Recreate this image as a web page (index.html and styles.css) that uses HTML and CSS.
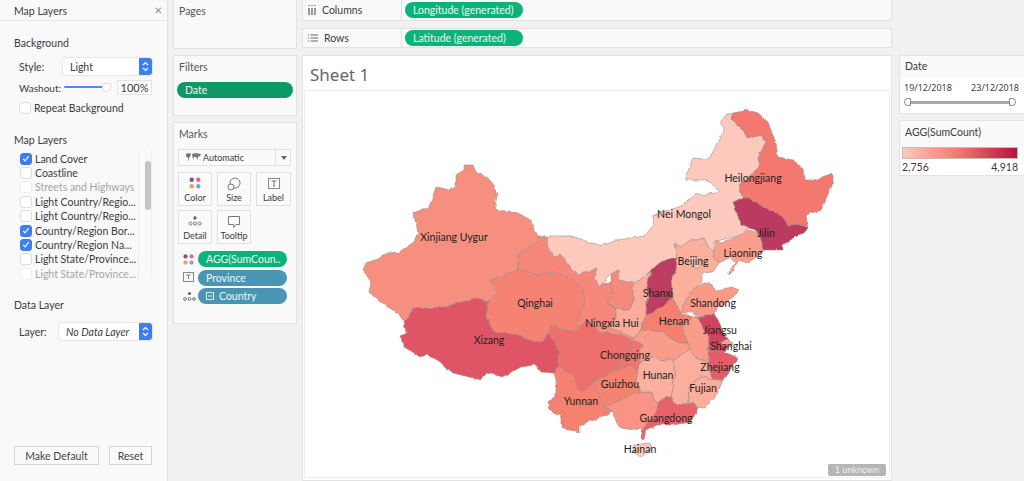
FILE: index.html
```html
<!DOCTYPE html>
<html lang="en">
<head>
<meta charset="utf-8">
<title>Map Layers</title>
<link rel="stylesheet" href="styles.css">
</head>
<body>
<div class="app">
  <aside class="layers">
    <header class="layers-head"><span>Map Layers</span><span class="close">×</span></header>
    <div class="layers-body">
      <h3 class="sec sec-bg">Background</h3>
      <div class="frow frow-style"><label class="flabel">Style:</label><div class="select sel-style"><span>Light</span><b class="stepper"><svg width="9" height="13" viewBox="0 0 9 13"><path d="M2 5l2.500-2.500L7 5M2 8l2.500 2.500L7 8" fill="none" stroke="#fff" stroke-width="1.200"/></svg></b></div></div>
      <div class="frow frow-wash"><label class="flabel">Washout:</label><div class="slider"><i class="slider-fill"></i><i class="slider-thumb"></i></div><span class="pct">100%</span></div>
      <div class="check repeat"><i class="box"></i>Repeat Background</div>
      <h3 class="sec sec-ml">Map Layers</h3>
      <div class="layer-list">
        <div class="check on"><i class="box"><svg width="11" height="11" viewBox="0 0 11 11"><path d="M2.500 5.800l2 2.200 4-5" fill="none" stroke="#fff" stroke-width="1.300"/></svg></i>Land Cover</div>
        <div class="check"><i class="box"></i>Coastline</div>
        <div class="check off"><i class="box"></i>Streets and Highways</div>
        <div class="check"><i class="box"></i>Light Country/Regio...</div>
        <div class="check"><i class="box"></i>Light Country/Regio...</div>
        <div class="check on"><i class="box"><svg width="11" height="11" viewBox="0 0 11 11"><path d="M2.500 5.800l2 2.200 4-5" fill="none" stroke="#fff" stroke-width="1.300"/></svg></i>Country/Region Bor...</div>
        <div class="check on"><i class="box"><svg width="11" height="11" viewBox="0 0 11 11"><path d="M2.500 5.800l2 2.200 4-5" fill="none" stroke="#fff" stroke-width="1.300"/></svg></i>Country/Region Na...</div>
        <div class="check"><i class="box"></i>Light State/Province...</div>
        <div class="check off"><i class="box"></i>Light State/Province...</div>
        <i class="scrollbar"></i>
      </div>
      <h3 class="sec sec-dl">Data Layer</h3>
      <div class="frow frow-layer"><label class="flabel">Layer:</label><div class="select sel-layer"><em>No Data Layer</em><b class="stepper"><svg width="9" height="13" viewBox="0 0 9 13"><path d="M2 5l2.500-2.500L7 5M2 8l2.500 2.500L7 8" fill="none" stroke="#fff" stroke-width="1.200"/></svg></b></div></div>
      <div class="btns"><button class="btn btn-default">Make Default</button><button class="btn btn-reset">Reset</button></div>
    </div>
  </aside>

  <div class="cards">
    <section class="card pages"><h4>Pages</h4></section>
    <section class="card filters"><h4>Filters</h4><div class="pill pill-date">Date</div></section>
    <section class="card marks">
      <h4>Marks</h4>
      <div class="mark-select"><svg width="15" height="10" viewBox="0 0 15 10"><path d="M0 1l3-1 2 1-1 3-1 .5L2.500 9 2 5 0 3zM6 1l4-1 5 1-1 2-2 1-.5 3L10 4 8 4 7.500 6.500 6.500 4z" fill="#777"/></svg><span>Automatic</span><b class="caret"></b></div>
      <div class="mark-grid">
        <div class="mbtn"><svg width="12" height="12" viewBox="0 0 12 12"><circle cx="2.700" cy="2.700" r="2.200" fill="#6b5b95"/><circle cx="9.300" cy="2.700" r="2.200" fill="#ec6a72"/><circle cx="2.700" cy="9.300" r="2.200" fill="#f59a5a"/><circle cx="9.300" cy="9.300" r="2.200" fill="#7fa5cf"/></svg><span>Color</span></div>
        <div class="mbtn"><svg width="14" height="14" viewBox="0 0 14 14"><circle cx="8" cy="6" r="5" fill="none" stroke="#777"/><circle cx="4" cy="10" r="3" fill="#fafafa" stroke="#777"/></svg><span>Size</span></div>
        <div class="mbtn"><svg width="14" height="14" viewBox="0 0 14 14"><rect x="1.500" y="1.500" width="11" height="10" fill="none" stroke="#888"/><path d="M4.500 4h5M7 4v5M6 9h2" stroke="#777" fill="none"/></svg><span>Label</span></div>
        <div class="mbtn"><svg width="14" height="12" viewBox="0 0 14 12"><circle cx="7" cy="3" r="1.700" fill="#666"/><circle cx="2.500" cy="8.500" r="1.500" fill="none" stroke="#777"/><circle cx="7" cy="8.500" r="1.500" fill="none" stroke="#777"/><circle cx="11.500" cy="8.500" r="1.500" fill="none" stroke="#777"/></svg><span>Detail</span></div>
        <div class="mbtn"><svg width="14" height="14" viewBox="0 0 14 14"><path d="M1.500 1.500h11v8H9L7 12.500 6.500 9.500h-5z" fill="none" stroke="#777"/></svg><span>Tooltip</span></div>
      </div>
      <div class="enc"><svg width="11" height="11" viewBox="0 0 12 12"><circle cx="2.700" cy="2.700" r="2.300" fill="#6b5b95"/><circle cx="9.300" cy="2.700" r="2.300" fill="#ec6a72"/><circle cx="2.700" cy="9.300" r="2.300" fill="#f59a5a"/><circle cx="9.300" cy="9.300" r="2.300" fill="#7fa5cf"/></svg><div class="pill pill-green">AGG(SumCoun..</div></div>
      <div class="enc"><svg width="11" height="11" viewBox="0 0 11 11"><rect x=".5" y=".5" width="10" height="9" fill="none" stroke="#888"/><path d="M3.500 3h4M5.500 3v4" stroke="#777" fill="none"/></svg><div class="pill pill-blue">Province</div></div>
      <div class="enc"><svg width="13" height="11" viewBox="0 0 13 11"><circle cx="6.500" cy="2.500" r="1.600" fill="#666"/><circle cx="2" cy="8" r="1.400" fill="none" stroke="#777"/><circle cx="6.500" cy="8" r="1.400" fill="none" stroke="#777"/><circle cx="11" cy="8" r="1.400" fill="none" stroke="#777"/></svg><div class="pill pill-blue"><svg class="minus" width="9" height="9" viewBox="0 0 9 9"><rect x=".5" y=".5" width="7" height="7" fill="none" stroke="#dfeef3"/><path d="M2 4h4" stroke="#dfeef3"/></svg>Country</div></div>
    </section>
  </div>

  <main class="main">
    <div class="shelf shelf-cols"><span class="shelf-label"><svg width="8" height="10" viewBox="0 0 8 10"><path d="M1 0v1M4 0v1M7 0v1M1 3v7M4 3v7M7 3v7" stroke="#666" stroke-width="1.300"/></svg>Columns</span><div class="pill pill-shelf">Longitude (generated)</div></div>
    <div class="shelf shelf-rows"><span class="shelf-label"><svg width="10" height="8" viewBox="0 0 10 8"><path d="M0 1h1M2.500 1H10M0 4h1M2.500 4H10M0 7h1M2.500 7H10" stroke="#666" stroke-width="1.200"/></svg>Rows</span><div class="pill pill-shelf">Latitude (generated)</div></div>
    <section class="sheet">
      <h2 class="sheet-title">Sheet 1</h2>
      <div class="view">
        <svg class="map" viewBox="303 90 586 388" width="586" height="388">
          <defs>
            <filter id="rough" filterUnits="userSpaceOnUse" x="303" y="90" width="586" height="388">
              <feTurbulence type="fractalNoise" baseFrequency="0.14" numOctaves="2" seed="4"/>
              <feDisplacementMap in="SourceGraphic" scale="3.500" xChannelSelector="R" yChannelSelector="G"/>
              <feGaussianBlur stdDeviation=".35"/>
            </filter>
          </defs>
          <g stroke="#9b8f8c" stroke-width=".6" stroke-linejoin="round" filter="url(#rough)">
            <path fill="#f78f80" stroke="none" d="M560 280L640 285L690 320L705 400L612 405L565 365Z"/>
            <path fill="#f78f80" d="M463 165L472 165L475 172L487 178L493 185L496 195L494 207L498 210L515 212L528 219L537 236L537 242L517 254L517 270L490 280L497 293L487 301L475 298L443 307L423 309L413 308L403 322L397 313L380 303L368 292L370 282L362 270L365 263L377 259L387 253L398 252L413 242L417 232L412 213L428 207L435 187L448 190L455 187L455 175L463 170Z"/>
            <path fill="#f6877a" d="M537 236L545 236L547 248L553 257L560 253L567 265L577 275L583 272L597 269L593 278L598 287L610 282L612 292L607 300L607 305L615 308L615 318L610 328L603 325L592 318L580 328L575 323L583 307L583 293L573 280L560 275L552 272L537 275L517 270L517 254L537 242Z"/>
            <path fill="#f7897c" d="M610 273L617 271L618 280L632 283L632 300L630 310L615 308L607 305L607 300L612 292L610 282Z"/>
            <path fill="#fbac9a" d="M632 283L643 277L650 270L646 287L647 297L644 315L640 330L633 338L610 328L615 318L615 308L630 310L632 300Z"/>
            <path fill="#fdc9bd" d="M545 236L570 236L600 246L617 240L643 236L653 225L653 215L662 212L678 207L693 195L715 193L718 190L707 180L685 180L685 175L693 158L707 160L713 150L723 130L720 120L727 114L732 113L730 120L740 127L747 139L760 135L765 142L757 158L759 165L755 170L738 186L743 198L732 202L735 210L740 225L747 228L740 235L720 240L713 242L713 253L707 247L703 238L697 240L690 240L680 247L673 243L676 258L660 262L650 270L643 277L632 283L618 280L617 271L610 273L598 287L593 278L597 269L583 272L577 275L567 265L560 253L553 257L547 248Z"/>
            <path fill="#f2786f" d="M732 113L747 110L757 113L767 122L775 143L777 157L792 160L802 168L803 180L813 180L832 173L832 183L820 210L805 215L807 228L793 223L788 227L782 217L775 213L763 208L748 198L743 198L738 186L755 170L759 165L757 158L765 142L760 135L747 139L740 127L730 120Z"/>
            <path fill="#ba3b5e" d="M743 198L748 198L763 208L775 213L782 217L788 227L793 223L807 228L803 233L797 235L782 245L782 250L763 250L760 240L755 230L747 228L740 225L735 210L732 202Z"/>
            <path fill="#f99f8c" d="M747 230L755 232L760 240L763 252L747 263L737 260L733 270L728 275L728 272L735 263L730 257L718 263L712 257L715 240L720 243L740 235Z"/>
            <path fill="#fbb09e" d="M673 243L680 247L690 240L697 240L703 238L707 247L713 252L712 257L718 263L712 272L702 273L702 282L693 288L685 300L680 312L672 298L670 280L675 270L676 258Z"/>
            <path fill="#fcc4b6" d="M688 258L694 256L700 260L700 266L693 269L688 265Z"/>
            <path fill="#bc3c5e" d="M660 262L676 258L675 270L670 280L672 298L660 308L645 316L646 305L647 297L646 287L650 270Z"/>
            <path fill="#f99a88" d="M680 313L685 300L693 288L707 282L715 290L732 287L739 290L732 297L717 308L713 313L702 317L692 313Z"/>
            <path fill="#f99c8a" d="M682 327L692 317L697 318L702 328L708 337L707 350L708 360L698 360L688 350L687 343L683 335Z"/>
            <path fill="#cf4461" d="M692 315L702 317L713 313L718 323L725 338L733 343L727 347L723 352L707 350L708 337L702 328L697 318Z"/>
            <path fill="#f58070" d="M645 316L660 308L672 298L680 313L692 317L682 327L683 335L688 343L677 343L663 332L640 330Z"/>
            <path fill="#f99c8a" d="M640 330L663 332L677 343L688 343L688 350L673 360L663 360L650 357L638 363L638 352L642 345L632 340L633 338Z"/>
            <path fill="#e35b68" d="M707 350L723 352L737 358L728 372L722 380L712 380L708 370L708 360Z"/>
            <path fill="#fbae9b" d="M673 360L688 350L698 360L708 360L708 370L712 380L700 377L688 387L687 403L675 405L670 397L673 380Z"/>
            <path fill="#fbae9b" d="M712 380L722 380L715 397L703 408L695 407L687 403L688 387L700 377Z"/>
            <path fill="#ea6269" d="M665 397L670 397L675 405L692 403L697 408L690 422L672 425L655 425L645 430L643 440L640 437L642 428L647 420L652 417L657 403Z"/>
            <path fill="#f99385" d="M603 408L623 398L638 392L650 392L653 398L657 403L652 417L647 420L642 428L633 430L620 428L613 418L612 412Z"/>
            <path fill="#fbb09e" d="M638 363L650 357L663 360L673 360L673 380L670 397L665 397L657 403L653 398L650 392L638 392L638 388L635 382L637 370Z"/>
            <path fill="#f4836f" d="M593 380L607 375L615 370L630 365L637 370L635 382L638 388L638 392L623 398L603 408L600 400L595 388Z"/>
            <path fill="#f07570" d="M632 340L642 345L638 352L638 363L637 370L630 365L615 370L613 370L628 350Z"/>
            <path fill="#ee6f6d" d="M550 323L558 328L573 332L585 320L598 332L620 335L632 340L628 350L613 370L607 375L593 380L590 385L583 392L577 390L572 375L560 370L557 368L557 350L553 340L547 333Z"/>
            <path fill="#f58271" d="M553 373L557 367L572 375L577 390L583 392L590 385L593 380L595 388L600 400L603 408L612 412L607 415L593 420L578 425L578 433L568 430L560 427L560 417L548 410L547 403L555 395L555 380Z"/>
            <path fill="#f58272" d="M490 280L517 270L537 275L552 272L560 275L573 280L583 293L583 307L575 323L580 328L573 332L558 328L550 323L547 333L540 343L530 340L518 335L493 332L485 317L487 301L497 293Z"/>
            <path fill="#e05466" d="M413 308L423 309L443 307L475 298L487 301L485 317L493 332L518 335L530 340L540 343L547 333L553 340L557 350L557 367L553 373L540 372L535 365L520 367L502 377L485 373L480 380L468 377L452 373L440 363L425 354L420 357L403 347L399 336L405 333L403 322Z"/>
            <path fill="#fdc9bd" d="M633 445L648 443L650 450L640 457L633 452Z"/>
            <path fill="#f4a494" d="M720 342L727 340L733 343L729 347L722 346Z"/>
          </g>
          <g class="labels">
            <text x="453" y="241">Xinjiang Uygur</text><text x="752" y="182">Heilongjiang</text><text x="683" y="218">Nei Mongol</text>
            <text x="765" y="237">Jilin</text><text x="742" y="257">Liaoning</text><text x="692" y="265">Beijing</text>
            <text x="534" y="307">Qinghai</text><text x="611" y="327">Ningxia Hui</text><text x="657" y="297">Shanxi</text>
            <text x="712" y="307">Shandong</text><text x="673" y="325">Henan</text><text x="719" y="334">Jiangsu</text>
            <text x="730" y="350">Shanghai</text><text x="488" y="344">Xizang</text><text x="624" y="359">Chongqing</text>
            <text x="719" y="371">Zhejiang</text><text x="657" y="379">Hunan</text><text x="619" y="388">Guizhou</text>
            <text x="702" y="392">Fujian</text><text x="580" y="405">Yunnan</text><text x="665" y="422">Guangdong</text><text x="639" y="453">Hainan</text>
          </g>
        </svg>
        <span class="unknown">1 unknown</span>
      </div>
    </section>
  </main>

  <div class="right">
    <section class="rcard date-card">
      <h4>Date</h4>
      <div class="date-body">
        <div class="date-vals"><span>19/12/2018</span><span>23/12/2018</span></div>
        <div class="range"><i class="knob"></i><i class="track"></i><i class="knob knob-r"></i></div>
      </div>
    </section>
    <section class="rcard legend-card">
      <h4>AGG(SumCount)</h4>
      <div class="ramp"></div>
      <div class="ramp-vals"><span>2,756</span><span>4,918</span></div>
    </section>
  </div>
</div>
</body>
</html>
```
FILE: styles.css
```css
* { box-sizing: border-box; }
html, body { margin: 0; height: 100%; overflow: hidden; }
body { font-family: "Lato", "Noto Sans", sans-serif; font-size: 10.500px; color: #3c3c3c; background: #f1f1f1; }
h2, h3, h4 { margin: 0; font-weight: 400; }
.app { display: flex; width: 1024px; height: 481px; }

/* left panel */
.layers { width: 168px; flex: none; background: #f9f9f9; border-right: 1px solid #e2e2e2; display: flex; flex-direction: column; }
.layers-head { height: 21px; padding: 1px 5px 0 14px; display: flex; justify-content: space-between; align-items: center; border-bottom: 1px solid #e8e8e8; }
.close { font-size: 13px; color: #888; line-height: 1; }
.layers-body { padding: 0 15px 0 14px; flex: 1; display: flex; flex-direction: column; }
.sec { font-size: 10.500px; line-height: 14px; }
.sec-bg { margin-top: 15px; }
.sec-ml { margin-top: 18px; }
.sec-dl { margin-top: 19px; }
.frow { display: flex; align-items: center; margin-left: 5px; }
.frow-style { margin-top: 8px; height: 17px; }
.frow-wash { margin-top: 4px; height: 17px; }
.flabel { flex: none; width: 44px; }
.frow-wash .flabel { font-size: 10px; }
.frow-layer { margin-top: 11px; height: 17px; }
.frow-layer .flabel { width: 40px; }
.select { flex: 1; height: 17px; background: #fff; border-radius: 3px; box-shadow: 0 0 2px #bbb; display: flex; justify-content: space-between; padding-left: 7px; align-items: center; }
.select em { font-style: italic; }
.stepper { width: 13px; height: 17px; background: #3d7ff0; border-radius: 0 3px 3px 0; display: flex; align-items: center; justify-content: center; }
.stepper svg { display: block; }
.slider { position: relative; width: 45px; height: 10px; margin-left: 1px; flex: none; }
.slider-fill { position: absolute; left: 0; right: 3px; top: 3px; height: 2px; background: #4f8cf0; border-radius: 1px; }
.slider-thumb { position: absolute; right: -2px; top: 0; width: 9px; height: 9px; background: #fff; border: 1px solid #ddd; border-radius: 2px 2px 5px 5px; }
.pct { margin-left: 8px; width: 35px; height: 15px; border: 1px solid #e4e4e4; background: #fafafa; text-align: center; line-height: 13px; font-size: 11px; }
.check { display: flex; align-items: center; height: 14.400px; white-space: nowrap; }
.box { width: 12px; height: 12px; flex: none; margin-right: 3px; border: 1px solid #ddd; border-radius: 3px; background: #fff; display: flex; align-items: center; justify-content: center; }
.check.on .box { background: #3d7ff0; border-color: #3d7ff0; }
.check.off { color: #a5a5a5; }
.check.off .box { border-color: #eee; }
.repeat { margin: 5px 0 0 5px; }
.layer-list { position: relative; margin: 3px 0 0 6px; height: 129px; padding-top: 1px; }
.scrollbar { position: absolute; right: 1px; top: 11px; width: 6px; height: 49px; border-radius: 3px; background: #c5c5c5; }
.layer-list::after { content: ""; position: absolute; right: 0; top: 0; bottom: 0; width: 12px; border-left: 1px solid #eee; border-right: 1px solid #f0f0f0; }
.btns { margin-top: auto; margin-bottom: 16px; display: flex; justify-content: space-between; }
.btn { height: 19px; padding: 0; font: inherit; color: #444; background: #fafafa; border: 1px solid #d5d5d5; }
.btn-default { width: 85px; }
.btn-reset { width: 43px; }

/* card column */
.cards { width: 129px; flex: none; margin-left: 5px; display: flex; flex-direction: column; gap: 6px; }
.card { width: 124px; background: #f9f9f9; border: 1px solid #e2e2e2; padding: 4px 4px; }
.card h4 { line-height: 14px; margin-left: 1px; color: #555; }
.pages { height: 49px; border-top: 0; }
.filters { height: 61px; }
.filters .pill-date { margin-top: 8px; margin-left: -1px; }
.marks { height: 202px; }
.pill { border-radius: 9px; color: #eef7f4; display: flex; align-items: center; padding-left: 8px; height: 16px; white-space: nowrap; }
.pill-date { background: #0d9866; width: 116px; }
.pill-green { background: #0bb27a; }
.pill-blue { background: #4b95b4; }
.minus { margin-right: 4px; }
.mark-select { margin-top: 8px; height: 17px; width: 113px; background: #fafafa; border: 1px solid #e0e0e0; display: flex; align-items: center; padding-left: 7px; font-size: 9px; gap: 2px; position: relative; }
.caret { position: absolute; right: 3px; top: 6px; border: 3.500px solid transparent; border-top: 4px solid #666; }
.mark-select::after { content: ""; position: absolute; right: 14px; top: 0; bottom: 0; width: 1px; background: #e0e0e0; }
.mark-grid { display: grid; grid-template-columns: 34px 34px 35px; column-gap: 5px; row-gap: 4px; margin-top: 6px; }
.mbtn { height: 34px; background: #fafafa; border: 1px solid #e0e0e0; display: flex; flex-direction: column; align-items: center; justify-content: space-between; padding: 4px 0 2px; font-size: 9px; white-space: nowrap; }
.enc { display: flex; align-items: center; margin-top: 2.500px; margin-left: 5px; justify-content: space-between; width: 104px; }
.mark-grid + .enc { margin-top: 7px; }
.enc .pill { width: 89px; height: 16px; }

/* main */
.main { width: 590px; flex: none; display: flex; flex-direction: column; }
.shelf { display: flex; align-items: center; background: #f9f9f9; border: 1px solid #e2e2e2; margin-bottom: 7px; }
.shelf-cols { height: 21px; border-top: 0; }
.shelf-rows { height: 20px; }
.shelf-label { width: 99px; height: 100%; display: flex; align-items: center; gap: 6px; padding-left: 5px; border-right: 1px solid #e2e2e2; margin-right: 3px; }
.pill-shelf { width: 118px; background: #0bb27a; }
.sheet { flex: 1; background: #fff; border: 1px solid #e2e2e2; display: flex; flex-direction: column; padding-left: 1px; }
.sheet-title { font-family: "Noto Sans", sans-serif; font-size: 17px; line-height: 24px; padding: 7px 0 3px 6px; color: #666; height: 34px; }
.view { position: relative; width: 586px; height: 388px; border: 1px solid #eee; }
.map { display: block; position: absolute; left: -1px; top: -1px; }
.labels text { font-size: 10.500px; fill: #222; text-anchor: middle; font-family: "Lato", sans-serif; }
.unknown { position: absolute; left: 523px; top: 373px; width: 58px; height: 12px; background: #b5b5b5; border-radius: 2px; color: #f2f2f2; font-size: 9px; line-height: 12px; text-align: center; }

/* right */
.right { flex: 1; margin-left: 7px; padding-top: 55px; display: flex; flex-direction: column; gap: 6px; }
.rcard { background: #f9f9f9; border: 1px solid #e2e2e2; border-right: 0; }
.rcard h4 { line-height: 14px; padding: 3px 0 0 5px; }
.date-card { height: 59px; }
.date-body { margin-top: 5px; background: #fff; height: 35px; padding: 3px 3px 0 4px; }
.date-vals { display: flex; justify-content: space-between; font-family: "Noto Sans", sans-serif; font-size: 9px; padding-right: 2px; }
.range { display: flex; align-items: center; width: 112px; margin-top: 4px; }
.track { flex: 1; height: 3px; background: #aaa; }
.knob { width: 7px; height: 8px; background: #fff; border: 1px solid #888; border-radius: 4px 0 0 4px; }
.knob-r { border-radius: 0 4px 4px 0; }
.legend-card { height: 56px; background: #fff; }
.legend-card h4 { background: #f9f9f9; height: 26px; padding-top: 4px; }
.ramp { width: 116px; height: 12px; margin: 0 0 0 2px; border: 1px solid #c8b8b4; background: linear-gradient(90deg, #fdc9bd 0%, #f2756c 50%, #b5123f 100%); }
.ramp-vals { display: flex; justify-content: space-between; width: 116px; margin-left: 2px; line-height: 17px; }
```
